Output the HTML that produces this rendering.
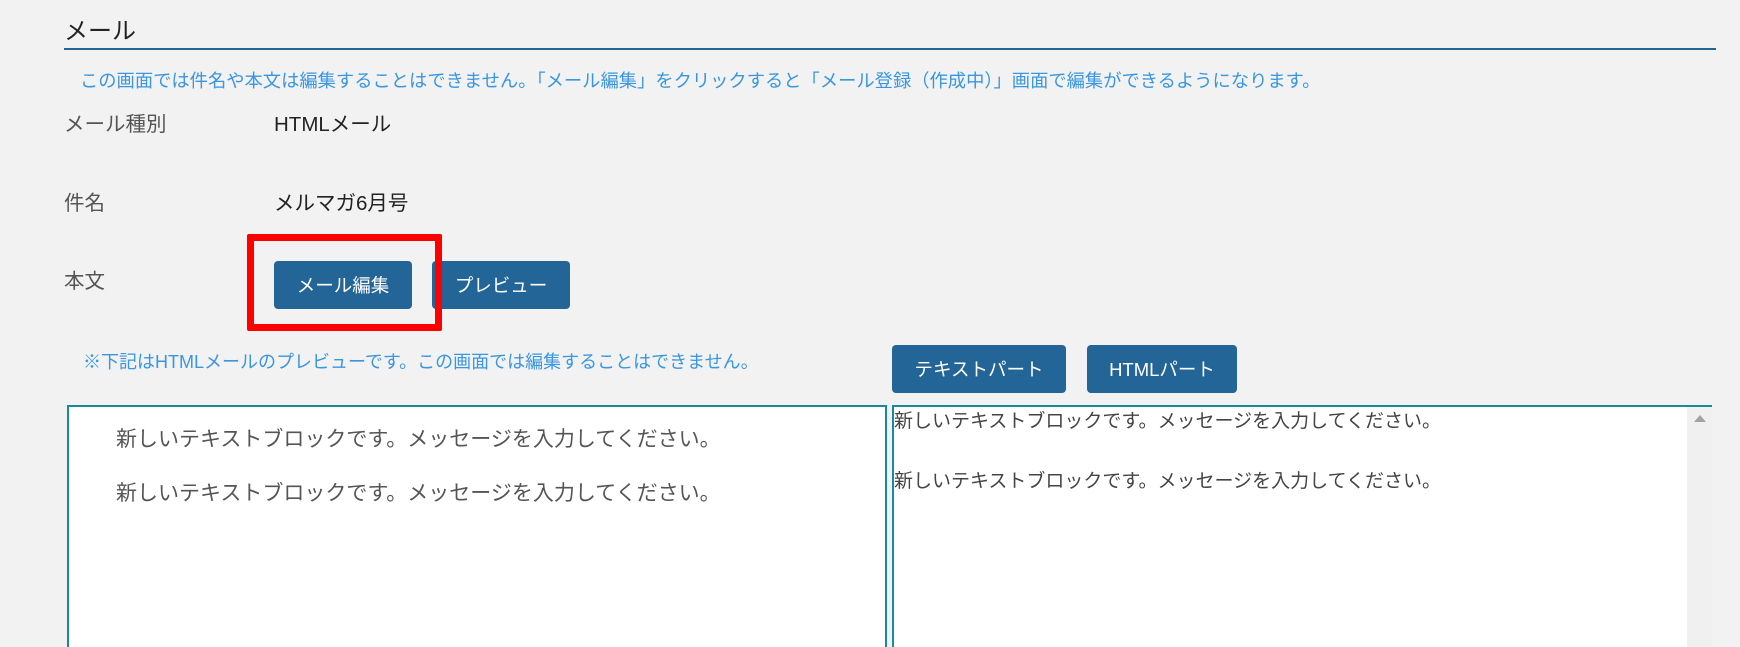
<!DOCTYPE html>
<html><head><meta charset="utf-8"><style>
body{margin:0;width:1740px;height:627px;background:#f2f2f2;font-family:"Liberation Sans","Noto Sans CJK JP",sans-serif;position:relative;overflow:hidden;color:#333}
.a{position:absolute;white-space:nowrap;line-height:1}
.btn{position:absolute;background:#236596;color:#fff;border-radius:4px;font-size:18.5px;display:flex;align-items:center;justify-content:center}
</style></head><body>
<div class="a" style="left:64px;top:20px;font-size:24px;color:#222">メール</div>
<div style="position:absolute;left:64px;top:48px;width:1652px;height:2px;background:#236596"></div>
<div class="a" style="left:80px;top:72px;font-size:18.3px;color:#3a96e0">この画面では件名や本文は編集することはできません。「メール編集」をクリックすると「メール登録（作成中）」画面で編集ができるようになります。</div>
<div class="a" style="left:64px;top:115px;font-size:20.5px;color:#555">メール種別</div>
<div class="a" style="left:274px;top:115px;font-size:20.5px;color:#222">HTMLメール</div>
<div class="a" style="left:64px;top:194px;font-size:20.5px;color:#555">件名</div>
<div class="a" style="left:274px;top:194px;font-size:20.5px;color:#222">メルマガ6月号</div>
<div class="a" style="left:64px;top:272px;font-size:20.5px;color:#555">本文</div>
<div class="btn" style="left:274px;top:261px;width:138px;height:48px">メール編集</div>
<div class="btn" style="left:432px;top:261px;width:138px;height:48px">プレビュー</div>
<div style="position:absolute;left:247px;top:234px;width:181px;height:83px;border:7px solid #f00;border-radius:2px"></div>
<div class="a" style="left:83px;top:353px;font-size:18px;color:#3a96e0">※下記はHTMLメールのプレビューです。この画面では編集することはできません。</div>
<div class="btn" style="left:892px;top:345px;width:174px;height:48px">テキストパート</div>
<div class="btn" style="left:1087px;top:345px;width:150px;height:48px">HTMLパート</div>
<div style="position:absolute;left:67px;top:405px;width:816px;height:240px;background:#fff;border:2px solid #1a8a9a;border-bottom:none"></div>
<div class="a" style="left:116px;top:429px;font-size:21px;color:#555">新しいテキストブロックです。メッセージを入力してください。</div>
<div class="a" style="left:116px;top:483px;font-size:21px;color:#555">新しいテキストブロックです。メッセージを入力してください。</div>
<div style="position:absolute;left:892px;top:405px;width:818px;height:240px;background:#fff;border:2px solid #1a8a9a;border-bottom:none;border-right:none"></div>
<div style="position:absolute;left:1687px;top:407px;width:25px;height:240px;background:#f0f0f0"></div>
<div style="position:absolute;left:1694px;top:415px;width:0;height:0;border-left:6px solid transparent;border-right:6px solid transparent;border-bottom:7px solid #a3a3a3"></div>
<div class="a" style="left:894px;top:412px;font-size:19px;color:#444">新しいテキストブロックです。メッセージを入力してください。</div>
<div class="a" style="left:894px;top:472px;font-size:19px;color:#444">新しいテキストブロックです。メッセージを入力してください。</div>
</body></html>
